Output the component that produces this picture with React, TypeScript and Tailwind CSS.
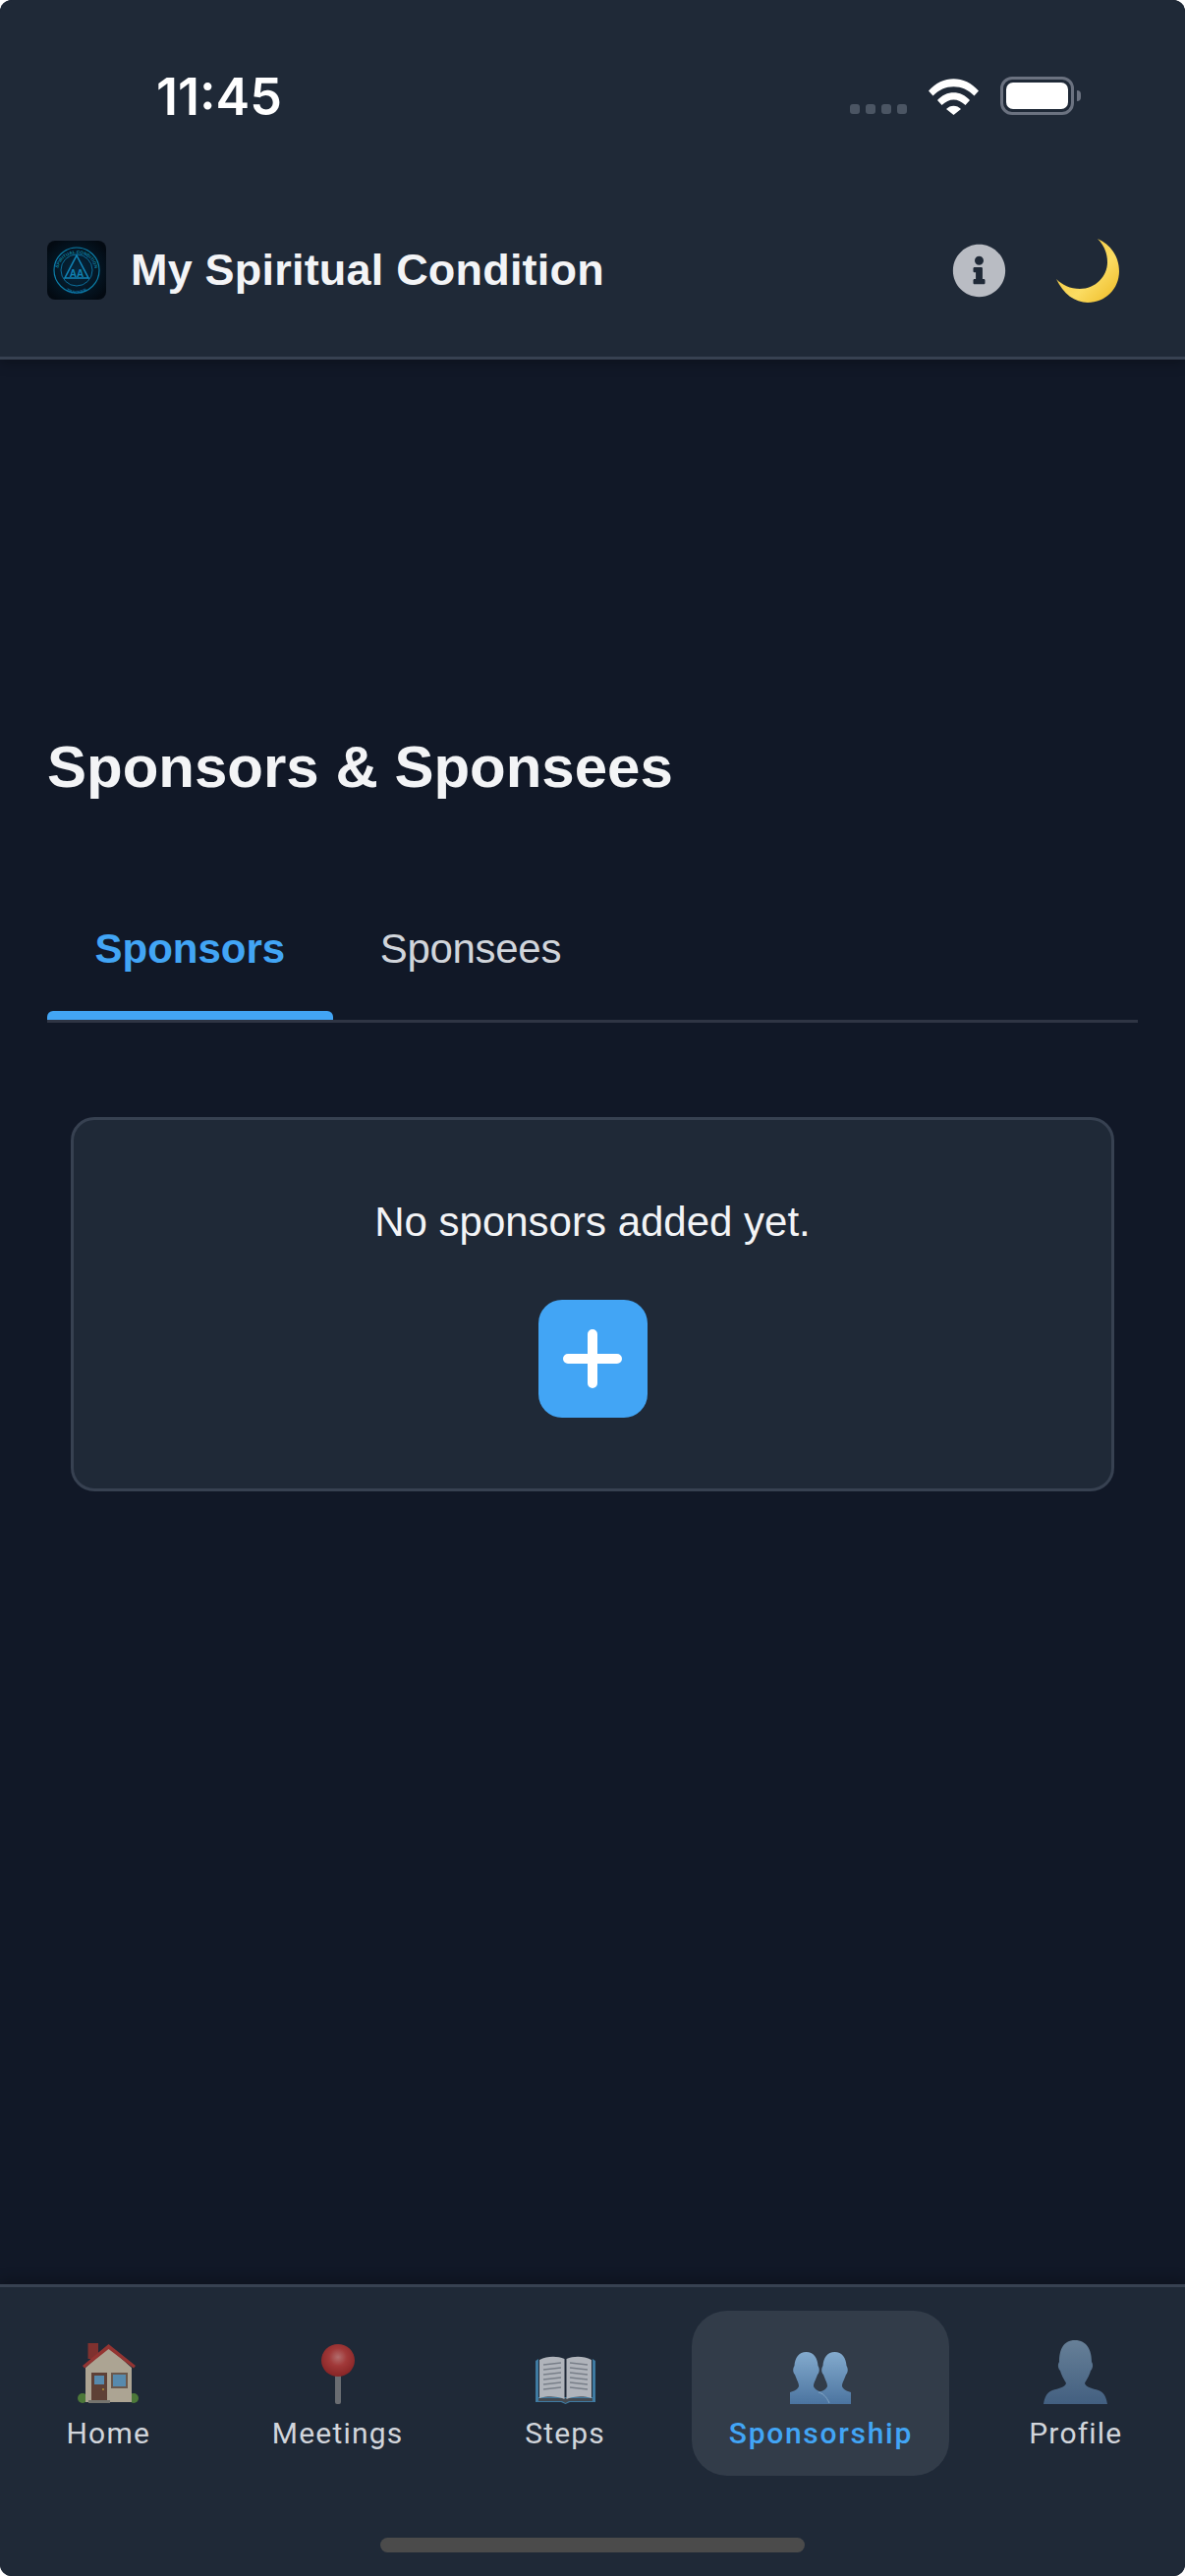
import {FaInfoCircle} from "react-icons/fa"

const bust = "M32 0C44 0 49 10 49 22C51 25 50 29 48 31C46 38 43 41 42 44C43 48 50 49 56 51C62 53 64 59 65 65L0 65C1 59 3 53 9 51C15 49 22 48 23 44C22 41 19 38 17 31C15 29 14 25 16 22C16 10 20 0 32 0Z"
const smallBust = "M17.500 0C25 0 29 6 29.500 14C31.500 17 31 21 29 23C27 29 25 31 25 35C26 38 30 40 34 41V53H1V41C5 40 9 38 10 35C10 31 8 29 6 23C4 21 3.500 17 5.500 14C6 6 10 0 17.500 0Z"

function Logo() {
    return (
        <svg viewBox="0 0 60 60" className="w-[60px] h-[60px] shrink-0">
            <defs>
                <radialGradient id="logoBg" cx="50%" cy="50%" r="60%">
                    <stop offset="0%" stopColor="#06283f"/>
                    <stop offset="100%" stopColor="#030a12"/>
                </radialGradient>
                <path id="logoTop" d="M11 32a19 19 0 0 1 38 0"/>
                <path id="logoBottom" d="M9 33a21 21 0 0 0 42 0"/>
            </defs>
            <rect width="60" height="60" rx="8" fill="url(#logoBg)"/>
            <circle cx="30" cy="30" r="23" fill="none" stroke="#0c7ea8" strokeWidth="1.2"/>
            <circle cx="30" cy="30" r="16" fill="none" stroke="#0b6f9c" strokeWidth="1"/>
            <text fontSize="4.6" fontWeight="700" fill="#0f87a8" fontFamily="Liberation Sans, sans-serif">
                <textPath href="#logoTop" startOffset="50%" textAnchor="middle">SPIRITUAL CONDITION</textPath>
            </text>
            <text fontSize="4.6" fontWeight="700" fill="#0b6fa0" fontFamily="Liberation Sans, sans-serif">
                <textPath href="#logoBottom" startOffset="50%" textAnchor="middle">TRACKER</textPath>
            </text>
            <path d="M30 15L42 38H18Z" fill="none" stroke="#1183b5" strokeWidth="1.6"/>
            <text x="30" y="37" textAnchor="middle" fontSize="10" fontWeight="700" fill="#1183b5"
                  fontFamily="Liberation Sans, sans-serif">AA</text>
        </svg>
    )
}

function Wifi() {
    return (
        <svg viewBox="0 0 51 37" className="w-[51px] h-[37px]">
            <path d="M0 12.5C14 -4 37 -4 51 12.5L46.5 17.5C35 5 16 5 4.5 17.5Z" fill="#fff"/>
            <path d="M9 22C18 11.5 33 11.5 42 22L37.500 27C30 19.500 21 19.500 13.500 27Z" fill="#fff"/>
            <path d="M18 31C22 26.500 29 26.500 33 31L25.500 37Z" fill="#fff"/>
        </svg>
    )
}

function Battery() {
    return (
        <div className="flex items-center gap-[3px]">
            <div className="w-[75px] h-[39px] rounded-[12px] border-[3px] border-[#6b7280] p-[3px]">
                <div className="w-full h-full rounded-[7px] bg-white"/>
            </div>
            <div className="w-[4px] h-[11px] rounded-r-full bg-[#6b7280]"/>
        </div>
    )
}

function Moon() {
    return (
        <svg viewBox="0 0 64 65" className="w-[64px] h-[65px]">
            <defs>
                <linearGradient id="moonFill" x1="0" y1="0" x2="1" y2="1">
                    <stop offset="0%" stopColor="#f0c02c"/>
                    <stop offset="60%" stopColor="#fbdc62"/>
                    <stop offset="100%" stopColor="#ecb821"/>
                </linearGradient>
            </defs>
            <path d="M42 0C56 6 64 19 64 33C64 51 50 65 32 65C19 65 7 56 0 41C6 47 14 51 24 51C40 51 52 38 52 24C52 14 48 6 42 0Z"
                  fill="url(#moonFill)"/>
        </svg>
    )
}

function House() {
    return (
        <svg viewBox="0 0 62 64" className="w-[62px] h-[64px] opacity-70">
            <circle cx="5" cy="58" r="5" fill="#5f9a3a"/>
            <circle cx="57" cy="58" r="5" fill="#5f9a3a"/>
            <rect x="10.500" y="2" width="10.500" height="16" fill="#a8352c"/>
            <path d="M31.500 6L8 27V62H55V27Z" fill="#e8d9ba"/>
            <path d="M31.500 3L5 25L7 27.500L31.500 8L57 27.500L59 25Z" fill="#c63a30"/>
            <rect x="14" y="32" width="16" height="28" fill="#7a4a36"/>
            <rect x="17" y="35" width="10" height="9" fill="#6fb4e0"/>
            <circle cx="26" cy="49" r="1" fill="#f2c230"/>
            <rect x="34" y="32" width="17" height="16" fill="#8a6d55"/>
            <rect x="36" y="34" width="13" height="12" fill="#6fb4e0"/>
            <rect x="11" y="60" width="22" height="3" fill="#9a9486"/>
        </svg>
    )
}

function Pin() {
    return (
        <svg viewBox="0 0 34 61" className="w-[34px] h-[61px] opacity-70">
            <defs>
                <radialGradient id="pinHead" cx="50%" cy="40%" r="60%">
                    <stop offset="0%" stopColor="#f08a84"/>
                    <stop offset="45%" stopColor="#d8403a"/>
                    <stop offset="100%" stopColor="#b3231f"/>
                </radialGradient>
            </defs>
            <rect x="14" y="30" width="6" height="31" rx="2" fill="#8b8b8b"/>
            <ellipse cx="17" cy="16.500" rx="17" ry="16.500" fill="url(#pinHead)"/>
        </svg>
    )
}

function Book() {
    return (
        <svg viewBox="0 0 61 49" className="w-[61px] h-[49px] opacity-70">
            <path d="M0 5L3 3V42H58V3L61 5V47H35L30.500 49L26 47H0Z" fill="#4d9fd0"/>
            <path d="M3 43H58V46H34L30.500 48L27 46H3Z" fill="#55585c"/>
            <path d="M4 4C12 0 22 0 29.500 3V44C22 41 12 41 4 43Z" fill="#eef0f4"/>
            <path d="M31.500 3C39 0 49 0 57 4V43C49 41 39 41 31.500 44Z" fill="#eef0f4"/>
            <path d="M8 9L26 7M8 14L26 12M8 19L26 17M8 24L26 22M8 29L26 27M8 34L26 32M35 7L53 9M35 12L53 14M35 17L53 19M35 22L53 24M35 27L53 29M35 32L53 34"
                  stroke="#9ea3ab" strokeWidth="1.500"/>
        </svg>
    )
}

function Busts() {
    return (
        <svg viewBox="0 0 64 53" className="w-[64px] h-[53px] opacity-75">
            <defs>
                <linearGradient id="bustsFill" x1="0" y1="0" x2="0" y2="1">
                    <stop offset="0%" stopColor="#9fd0fa"/>
                    <stop offset="100%" stopColor="#5487bd"/>
                </linearGradient>
            </defs>
            <path d={smallBust} transform="translate(29 0)" fill="url(#bustsFill)"/>
            <path d={smallBust} fill="url(#bustsFill)"/>
            <path d="M30 41C34 42 38 45 41 52" fill="none" stroke="#a9d2f4" strokeWidth="0.8"/>
        </svg>
    )
}

function Profile() {
    return (
        <svg viewBox="0 0 65 65" className="w-[65px] h-[65px] opacity-75">
            <defs>
                <linearGradient id="profileFill" x1="0" y1="0" x2="0" y2="1">
                    <stop offset="0%" stopColor="#7f9db8"/>
                    <stop offset="100%" stopColor="#4f7299"/>
                </linearGradient>
            </defs>
            <path d={bust} fill="url(#profileFill)"/>
        </svg>
    )
}

function NavItem({label, icon, active, className = ""}: {label: string; icon: React.ReactNode; active?: boolean; className?: string}) {
    return (
        <div className={`flex flex-col items-center h-[168px] px-[37.5px] pt-[30px] rounded-[36px] ${active ? "bg-[#323c49]" : ""} ${className}`}>
            <div className="h-[65px] flex items-end justify-center">{icon}</div>
            <div className={`mt-[10px] text-[30px] leading-[40px] whitespace-nowrap ${active ? "tracking-[1.7px] text-[#42a5f5] font-medium" : "tracking-[1.2px] text-[#d1d5db]"}`}>
                {label}
            </div>
        </div>
    )
}

export default function App() {
    return (
        <div className="w-[1206px] h-[2622px] bg-white">
            <div className="w-full h-full rounded-[12px] overflow-hidden bg-[#111827] flex flex-col font-['Liberation_Sans',sans-serif]">
                <div className="bg-[#1f2937] border-b-[3px] border-[#374151] shadow-[0_4px_12px_rgba(0,0,0,0.25)]">
                    <div className="h-[197px] flex items-center justify-between pl-[159px] pr-[106px]">
                        <span className="text-[52px] leading-none font-semibold text-white font-['Inter',sans-serif]">11:45</span>
                        <div className="flex items-end gap-[22px] mb-[2px]">
                            <div className="flex gap-[6px] mb-[1px]">
                                <div className="w-[10px] h-[10px] rounded-[3px] bg-[#4b5563]"/>
                                <div className="w-[10px] h-[10px] rounded-[3px] bg-[#4b5563]"/>
                                <div className="w-[10px] h-[10px] rounded-[3px] bg-[#4b5563]"/>
                                <div className="w-[10px] h-[10px] rounded-[3px] bg-[#4b5563]"/>
                            </div>
                            <Wifi/>
                            <Battery/>
                        </div>
                    </div>
                    <div className="h-[66px] mt-[45px] mb-[55px] flex items-center pl-[48px] pr-[67px]">
                        <Logo/>
                        <h1 className="ml-[25px] text-[45px] tracking-[0.2px] font-bold text-[#f3f4f6]">My Spiritual Condition</h1>
                        <div className="ml-auto flex items-center gap-[51px]">
                            <FaInfoCircle className="w-[55px] h-[55px] text-[#b9bcc3]"/>
                            <Moon/>
                        </div>
                    </div>
                </div>

                <div className="flex-1 px-[48px] pt-[379px]">
                    <h2 className="text-[60px] leading-[72px] font-bold text-[#f3f4f6]">Sponsors &amp; Sponsees</h2>
                    <div className="mt-[125px] flex border-b-[3px] border-[#2f3544]">
                        <div className="relative px-[48.5px] pb-[48px] text-[42px] leading-[48px] font-bold text-[#42a5f5]">
                            Sponsors
                            <div className="absolute left-0 right-0 bottom-0 h-[9px] rounded-t-[6px] bg-[#42a5f5]"/>
                        </div>
                        <div className="px-[48px] pb-[48px] text-[42px] leading-[48px] tracking-[-0.3px] text-[#d1d5db]">Sponsees</div>
                    </div>
                    <div className="mt-[96px] mx-[24px] h-[381px] rounded-[24px] border-[3px] border-[#374151] bg-[#1f2937] flex flex-col items-center pt-[80px]">
                        <p className="text-[42px] leading-[48px] text-[#f3f4f6]">No sponsors added yet.</p>
                        <button className="mt-[55px] w-[111px] h-[120px] rounded-[24px] bg-[#42a5f5] flex items-center justify-center">
                            <svg viewBox="0 0 60 60" className="w-[60px] h-[60px]">
                                <path d="M30 5V55M5 30H55" stroke="#fff" strokeWidth="10" strokeLinecap="round"/>
                            </svg>
                        </button>
                    </div>
                </div>

                <div className="h-[297px] bg-[#1f2937] border-t-[3px] border-[#374151] shadow-[0_-4px_12px_rgba(0,0,0,0.25)] font-['Roboto',sans-serif]">
                    <div className="mt-[24px] pl-[30px] pr-[26px] flex justify-between">
                        <NavItem label="Home" icon={<House/>}/>
                        <NavItem label="Meetings" icon={<Pin/>}/>
                        <NavItem label="Steps" icon={<Book/>}/>
                        <NavItem label="Sponsorship" icon={<Busts/>} active className="ml-[2px]"/>
                        <NavItem label="Profile" icon={<Profile/>} className="pl-[32px]"/>
                    </div>
                    <div className="mt-[63px] mx-auto w-[432px] h-[15px] rounded-full bg-[#4b4b4b]"/>
                </div>
            </div>
        </div>
    )
}
